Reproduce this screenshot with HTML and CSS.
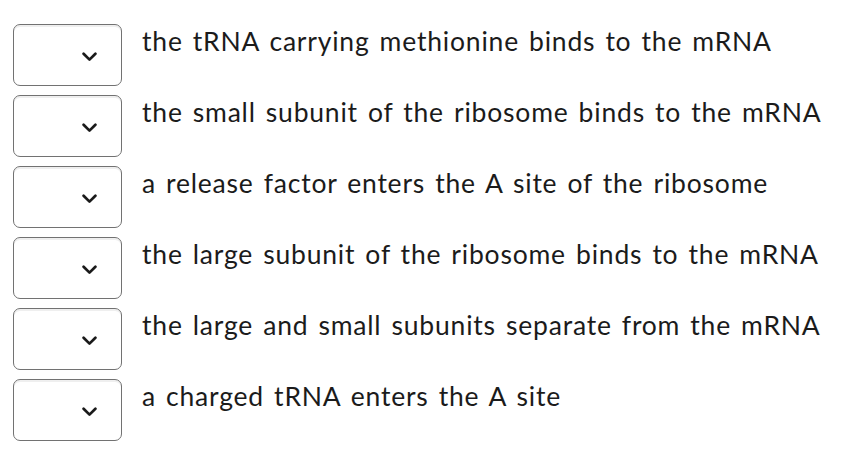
FILE: index.html
```html
<!DOCTYPE html>
<html lang="en">
<head>
<meta charset="utf-8">
<title>Translation steps</title>
<link rel="stylesheet" href="styles.css">
</head>
<body>
<ul class="steps">
  <li class="step">
    <div class="dropdown"><svg class="chevron" viewBox="0 0 15 10"><path d="M1.6 1.8 L7.5 7.6 L13.4 1.8"/></svg></div>
    <span class="label">the tRNA carrying methionine binds to the mRNA</span>
  </li>
  <li class="step">
    <div class="dropdown"><svg class="chevron" viewBox="0 0 15 10"><path d="M1.6 1.8 L7.5 7.6 L13.4 1.8"/></svg></div>
    <span class="label">the small subunit of the ribosome binds to the mRNA</span>
  </li>
  <li class="step">
    <div class="dropdown"><svg class="chevron" viewBox="0 0 15 10"><path d="M1.6 1.8 L7.5 7.6 L13.4 1.8"/></svg></div>
    <span class="label">a release factor enters the A site of the ribosome</span>
  </li>
  <li class="step">
    <div class="dropdown"><svg class="chevron" viewBox="0 0 15 10"><path d="M1.6 1.8 L7.5 7.6 L13.4 1.8"/></svg></div>
    <span class="label">the large subunit of the ribosome binds to the mRNA</span>
  </li>
  <li class="step">
    <div class="dropdown"><svg class="chevron" viewBox="0 0 15 10"><path d="M1.6 1.8 L7.5 7.6 L13.4 1.8"/></svg></div>
    <span class="label">the large and small subunits separate from the mRNA</span>
  </li>
  <li class="step">
    <div class="dropdown"><svg class="chevron" viewBox="0 0 15 10"><path d="M1.6 1.8 L7.5 7.6 L13.4 1.8"/></svg></div>
    <span class="label">a charged tRNA enters the A site</span>
  </li>
</ul>
</body>
</html>
```
FILE: styles.css
```css
html, body {
  margin: 0;
  background: #ffffff;
}

body {
  font-family: Lato, "Liberation Sans", sans-serif;
  color: #1b1b1b;
}

.steps {
  list-style: none;
  margin: 0;
  padding: 24px 0 0 13px;
  display: flex;
  flex-direction: column;
  gap: 9px;
}

.step {
  display: flex;
  align-items: flex-start;
  gap: 20px;
}

.dropdown {
  flex: none;
  box-sizing: border-box;
  width: 109px;
  height: 62px;
  border: 1px solid #727272;
  border-radius: 7px;
  background: #ffffff;
  box-shadow: inset 0 2px 0 #efefef;
  display: flex;
  align-items: center;
  justify-content: flex-end;
  padding: 3px 24px 0 0;
}

.chevron {
  width: 15px;
  height: 10px;
  fill: none;
  stroke: #1a1a1a;
  stroke-width: 2.7;
  stroke-linecap: round;
  stroke-linejoin: round;
}

.label {
  font-size: 26.5px;
  line-height: 31px;
  padding-top: 1.5px;
  letter-spacing: 0.8px;
  word-spacing: 2.5px;
  white-space: nowrap;
}
```
